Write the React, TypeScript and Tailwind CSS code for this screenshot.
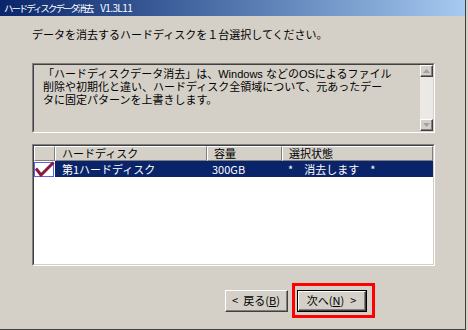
import React from 'react';

// Win2000-style 3D edges
const Raised: React.FC<{ className?: string; children?: React.ReactNode }> = ({ className = '', children }) => (
  <div className={`border-t border-l border-white border-b border-r border-b-[#404040] border-r-[#404040] ${className}`}>
    <div className="w-full h-full border-b border-r border-[#808080] flex items-center justify-center">
      {children}
    </div>
  </div>
);

const Sunken: React.FC<{ className?: string; children?: React.ReactNode }> = ({ className = '', children }) => (
  <div className={`border-t border-l border-[#808080] border-b border-r border-b-white border-r-white ${className}`}>
    <div className="w-full h-full border-t border-l border-[#404040] border-b border-r border-b-[#d4d0c8] border-r-[#d4d0c8] flex">
      {children}
    </div>
  </div>
);

const ScrollButton: React.FC<{ up?: boolean }> = ({ up }) => (
  <Raised className="w-[13px] h-[12px] bg-[#d4d0c8]">
    <svg width="7" height="4" viewBox="0 0 7 4">
      {up ? (
        <polygon points="3.5,0 7,4 0,4" fill="#a0a0a0" />
      ) : (
        <polygon points="0,0 7,0 3.5,4" fill="#a0a0a0" />
      )}
    </svg>
  </Raised>
);

const HeaderCell: React.FC<{ w: string; children?: React.ReactNode }> = ({ w, children }) => (
  <div className={`${w} h-[15px] bg-[#d4d0c8] border-t border-l border-white border-b border-r border-b-[#808080] border-r-[#808080] pl-[6px] flex items-center`}>
    {children}
  </div>
);

const descLines = [
  '「ハードディスクデータ消去」は、Windows などのOSによるファイル',
  '削除や初期化と違い、ハードディスク全領域について、元あったデー',
  'タに固定パターンを上書きします。',
];

export default function App() {
  return (
    <div className="w-[468px] h-[330px] bg-[#d4d0c8] font-['Noto_Sans_CJK_JP',sans-serif] text-[11px] leading-[13px] text-black overflow-hidden">
      <div className="w-[466px] h-[330px] flex flex-col border-r border-b border-[#404040]">
        {/* title bar */}
        <div className="h-[16px] shrink-0 bg-linear-to-r from-[#0a246a] to-[#a6caf0] text-white leading-[16px] px-[4px] flex items-center whitespace-nowrap">
          <span className="text-[9.5px] tracking-[-2.1px]">ハードディスクデータ消去</span>
          <span className="ml-[8px] text-[10px] tracking-[-0.6px]">V1.3L11</span>
        </div>

        <div className="flex-1 flex flex-col pl-[32px] pr-[30px]">
          <div className="mt-[12px] h-[12px] leading-[12px] whitespace-nowrap">
            データを消去するハードディスクを１台選択してください。
          </div>

          {/* description box; Liberation first keeps the line boxes within 13px */}
          <Sunken className="mt-[23px] w-[403px] h-[70px]">
            <div className="flex-1 pl-[9px] pt-[3px] whitespace-nowrap font-['Liberation_Sans','Noto_Sans_CJK_JP',sans-serif]">
              {descLines.map((line) => (
                <div key={line} className="h-[13px] leading-[13px]">
                  {line}
                </div>
              ))}
            </div>
            <div className="w-[13px] flex flex-col bg-[#ebe9e5]">
              <ScrollButton up />
              <div className="flex-1" />
              <ScrollButton />
            </div>
          </Sunken>

          {/* list view */}
          <Sunken className="mt-[11px] w-[403px] h-[122px]">
            <div className="flex-1 bg-white flex flex-col">
              <div className="flex">
                <HeaderCell w="w-[21px]" />
                <HeaderCell w="w-[152px]">ハードディスク</HeaderCell>
                <HeaderCell w="w-[75px]">容量</HeaderCell>
                <HeaderCell w="w-[151px]">選択状態</HeaderCell>
              </div>
              <div className="flex h-[16px]">
                <div className="w-[21px] h-[16px] relative">
                  <div className="absolute left-[0px] top-[1px] w-[20px] h-[15px] border border-[#6060e8] bg-white" />
                  <svg className="absolute left-0 top-0" width="21" height="16" viewBox="0 0 21 16">
                    <path d="M2 7.5 L7 14 L19.5 1.5" fill="none" stroke="#8c1a3a" strokeWidth="3" strokeLinejoin="miter" />
                  </svg>
                </div>
                <div className="flex-1 bg-[#0a246a] text-white flex items-center">
                  <div className="w-[152px] pl-[7px] whitespace-nowrap">第1ハードディスク</div>
                  <div className="w-[75px] pl-[5px]">300GB</div>
                  <div className="flex-1 pl-[6px] flex items-center whitespace-nowrap">
                    <span>*</span>
                    <span className="ml-[11px]">消去します</span>
                    <span className="ml-[11px]">*</span>
                  </div>
                </div>
              </div>
            </div>
          </Sunken>

          {/* buttons */}
          <div className="mt-[17px] flex justify-end items-start mr-[60px]">
            <Raised className="mt-[7px] mr-[4px] w-[63px] h-[22px] bg-[#d4d0c8]">
              <span className="whitespace-nowrap flex items-center">
                <span>&lt;</span>
                <span className="ml-[5px]">戻る(<span className="underline">B</span>)</span>
              </span>
            </Raised>
            <div className="border-[3px] border-[#ff0000] pl-[2px] pr-[5px] pt-[4px] pb-[3px]">
              <div className="border border-black">
                <Raised className="w-[68px] h-[20px] bg-[#d4d0c8]">
                  <span className="whitespace-nowrap flex items-center">
                    <span>次へ(<span className="underline">N</span>)</span>
                    <span className="ml-[6px]">&gt;</span>
                  </span>
                </Raised>
              </div>
            </div>
          </div>
        </div>
      </div>
    </div>
  );
}
